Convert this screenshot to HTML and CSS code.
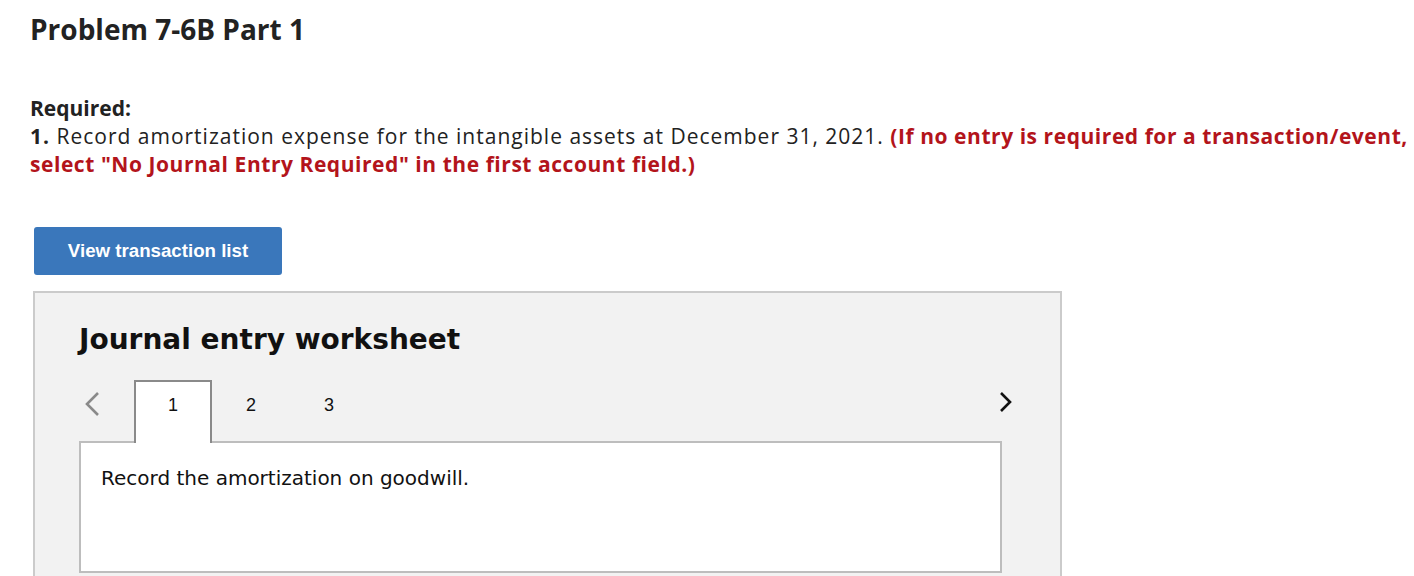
FILE: index.html
```html
<!DOCTYPE html>
<html>
<head>
<meta charset="utf-8">
<link rel="stylesheet" href="styles.css">
</head>
<body>
<div class="page">
  <h1 class="title">Problem 7-6B Part 1</h1>
  <div class="required">
    <div class="req-label">Required:</div>
    <p class="req-text"><b>1.</b> Record amortization expense for the intangible assets at December 31, 2021. <span class="red">(If no entry is required for a transaction/event, select "No Journal Entry Required" in the first account field.)</span></p>
  </div>
  <button class="btn">View transaction list</button>
  <div class="panel">
    <h2 class="panel-title">Journal entry worksheet</h2>
    <div class="tabs">
      <span class="chev chev-left"><svg width="20" height="26" viewBox="0 0 20 26"><polyline points="16,2 5,13 16,24" fill="none" stroke="#8a8a8a" stroke-width="2.6"/></svg></span>
      <div class="tab active">1</div>
      <div class="tab">2</div>
      <div class="tab">3</div>
      <span class="spacer"></span>
      <span class="chev chev-right"><svg width="16" height="22" viewBox="0 0 16 22"><polyline points="3,2 12,11 3,20" fill="none" stroke="#111" stroke-width="2.6"/></svg></span>
    </div>
    <div class="content">Record the amortization on goodwill.</div>
  </div>
</div>
</body>
</html>
```
FILE: styles.css
```css
html, body { margin: 0; padding: 0; background: #fff; }
body { font-family: "Open Sans", "Lato", sans-serif; color: #222; }
.page { padding-left: 30px; width: 1384px; }
.title { margin: 0; padding-top: 12px; font-size: 28px; font-weight: 700; line-height: 34px; color: #222; }
.required { margin-top: 48px; font-size: 21px; line-height: 28px; letter-spacing: 1px; }
.req-label { font-weight: 700; letter-spacing: 0; }
.req-text { margin: 0; width: 1384px; }
.red { color: #b3141b; font-weight: 700; letter-spacing: 0.55px; }
.btn { display: block; margin: 49px 0 0 4px; width: 248px; height: 48px; background: #3a77bb; color: #fff; border: none; border-radius: 3px; font-family: "Liberation Sans", Arial, sans-serif; font-weight: 700; font-size: 18.7px; padding: 0; }
.panel { margin: 16px 0 0 3px; width: 981px; height: 300px; background: #f2f2f2; border: 2px solid #cbcbcb; box-sizing: content-box; padding: 0 0 0 44px; }
.panel-title { margin: 0; padding-top: 30px; font-family: "DejaVu Sans", Verdana, sans-serif; font-weight: 700; font-size: 28px; line-height: 34px; color: #111; }
.tabs { display: flex; align-items: flex-start; margin-top: 23px; width: 923px; height: 62px; }
.chev { display: flex; }
.chev-left { width: 55px; padding: 11px 0 0 3px; box-sizing: border-box; }
.tab { width: 78px; height: 62px; box-sizing: border-box; text-align: center; font-family: "Liberation Sans", Arial, sans-serif; font-size: 18px; color: #111; padding-top: 15px; }
.tab.active { background: #fff; border: 2px solid #8a8a8a; border-bottom: none; position: relative; z-index: 1; padding-top: 13px; height: 63px; }
.spacer { flex: 1; }
.chev-right { padding-top: 11px; margin-right: -12px; }
.content { width: 923px; height: 132px; box-sizing: border-box; background: #fff; border: 2px solid #bdbdbd; margin-top: -1px; padding: 23px 0 0 20px; font-family: "DejaVu Sans", Verdana, sans-serif; font-size: 20px; color: #111; }
```
